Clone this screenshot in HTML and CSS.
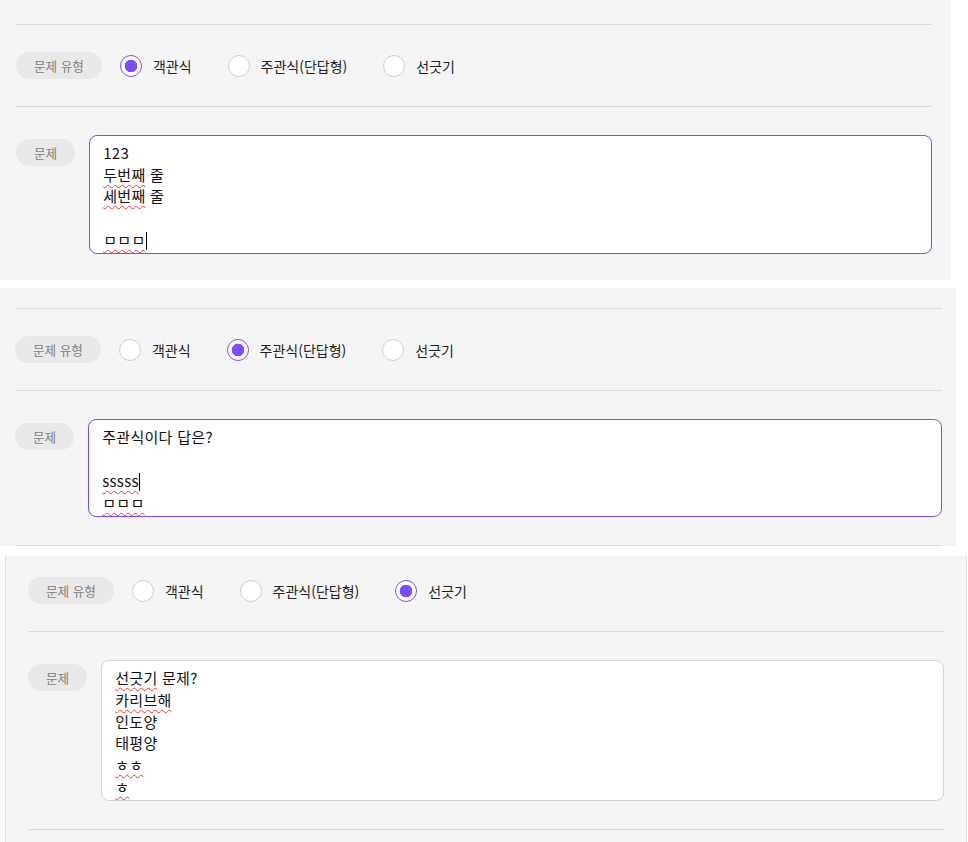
FILE: index.html
```html
<!DOCTYPE html>
<html lang="ko">
<head>
  <meta charset="UTF-8">
  <meta name="viewport" content="width=device-width, initial-scale=1.0">
  <title>문제 유형</title>
  <link rel="stylesheet" href="styles.css">
</head>
<body>
  <!-- 객관식 -->
  <section class="shot shot-1">
    <div class="rule"></div>
    <div class="type-row">
      <span class="pill">문제 유형</span>
      <label class="option"><input type="radio" name="type1" checked><span>객관식</span></label>
      <label class="option"><input type="radio" name="type1"><span>주관식(단답형)</span></label>
      <label class="option"><input type="radio" name="type1"><span>선긋기</span></label>
    </div>
    <div class="rule"></div>
    <div class="question-row">
      <span class="pill pill-small">문제</span>
      <div class="editor focused">
        <div class="line">123</div>
        <div class="line"><span class="typo">두번째</span> 줄</div>
        <div class="line"><span class="typo">세번째</span> 줄</div>
        <div class="line"></div>
        <div class="line"><span class="typo">ㅁㅁㅁ</span><span class="caret"></span></div>
      </div>
    </div>
  </section>

  <!-- 주관식 -->
  <section class="shot shot-2">
    <div class="rule"></div>
    <div class="type-row">
      <span class="pill">문제 유형</span>
      <label class="option"><input type="radio" name="type2"><span>객관식</span></label>
      <label class="option"><input type="radio" name="type2" checked><span>주관식(단답형)</span></label>
      <label class="option"><input type="radio" name="type2"><span>선긋기</span></label>
    </div>
    <div class="rule"></div>
    <div class="question-row">
      <span class="pill pill-small">문제</span>
      <div class="editor focused">
        <div class="line">주관식이다 답은?</div>
        <div class="line"></div>
        <div class="line"><span class="typo">sssss</span><span class="caret"></span></div>
        <div class="line"><span class="typo">ㅁㅁㅁ</span></div>
      </div>
    </div>
    <div class="rule"></div>
  </section>

  <!-- 선긋기 -->
  <section class="shot shot-3">
    <div class="type-row type-row-top">
      <span class="pill">문제 유형</span>
      <label class="option"><input type="radio" name="type3"><span>객관식</span></label>
      <label class="option"><input type="radio" name="type3"><span>주관식(단답형)</span></label>
      <label class="option"><input type="radio" name="type3" checked><span>선긋기</span></label>
    </div>
    <div class="rule"></div>
    <div class="question-row">
      <span class="pill pill-small">문제</span>
      <div class="editor">
        <div class="line"><span class="typo">선긋기</span> 문제?</div>
        <div class="line"><span class="typo">카리브해</span></div>
        <div class="line">인도양</div>
        <div class="line">태평양</div>
        <div class="line"><span class="typo">ㅎㅎ</span></div>
        <div class="line"><span class="typo">ㅎ</span></div>
      </div>
    </div>
    <div class="rule"></div>
  </section>
</body>
</html>
```

FILE: styles.css
```css
body {
  margin: 0;
  background: #fff;
  font-family: 'Noto Sans CJK KR', 'Noto Sans', sans-serif;
  color: #222;
}
.shot {
  background: #f5f5f5;
  box-sizing: border-box;
}
.shot-1 {
  width: 951px;
  padding: 24px 19px 0 16px;
}
.shot-1 .question-row {
  padding-bottom: 26px;
}
.shot-2 {
  width: 956px;
  margin-top: 8px;
  padding: 20px 14px 0 15px;
}
.shot-3 {
  width: 962px;
  margin: 10px 0 0 5px;
  padding: 0 22px 20px 22px;
  border-left: 1px solid #e2e2e2;
  border-right: 1px solid #e2e2e2;
}
.rule {
  height: 1px;
  background: #dadada;
}

/* type select */
.type-row {
  height: 81px;
  display: flex;
  align-items: center;
}
.type-row-top {
  height: 75px;
  padding-bottom: 6px;
  box-sizing: border-box;
}
.pill {
  display: inline-block;
  height: 27px;
  line-height: 27px;
  padding: 0 18px;
  border-radius: 14px;
  background: #e9e9e9;
  color: #808080;
  font-size: 12.6px;
  white-space: nowrap;
  flex-shrink: 0;
}
.type-row .pill {
  margin-right: 18px;
}
.option {
  display: flex;
  align-items: center;
  gap: 11px;
  margin-right: 36px;
  font-size: 14px;
  color: #222;
  cursor: pointer;
}
.option input {
  appearance: none;
  -webkit-appearance: none;
  margin: 0;
  width: 22px;
  height: 22px;
  border: 1px solid #cfcfcf;
  border-radius: 50%;
  background: #fff;
  box-sizing: border-box;
}
.option input:checked {
  border: 1.5px solid #7c4dff;
  background: radial-gradient(circle, #7c4dff 0 6px, #fff 6.6px);
}

/* question */
.question-row {
  display: flex;
  align-items: flex-start;
  padding: 28px 0;
}
.pill-small {
  margin: 4px 14px 0 0;
}
.editor {
  flex: 1;
  background: #fff;
  border: 1px solid #d4d4d4;
  border-radius: 8px;
  padding: 6px 13px 3px;
  font-size: 15px;
  letter-spacing: 0.3px;
  line-height: 21.7px;
  color: #111;
}
.editor.focused {
  border-color: #7c4dff;
}
.line {
  height: 21.7px;
  white-space: pre;
}
.typo {
  text-decoration: underline wavy #e83a3a;
  text-decoration-thickness: 1px;
  text-underline-offset: 3px;
}
.caret {
  display: inline-block;
  width: 1px;
  height: 18px;
  background: #000;
  vertical-align: -4px;
}
```
